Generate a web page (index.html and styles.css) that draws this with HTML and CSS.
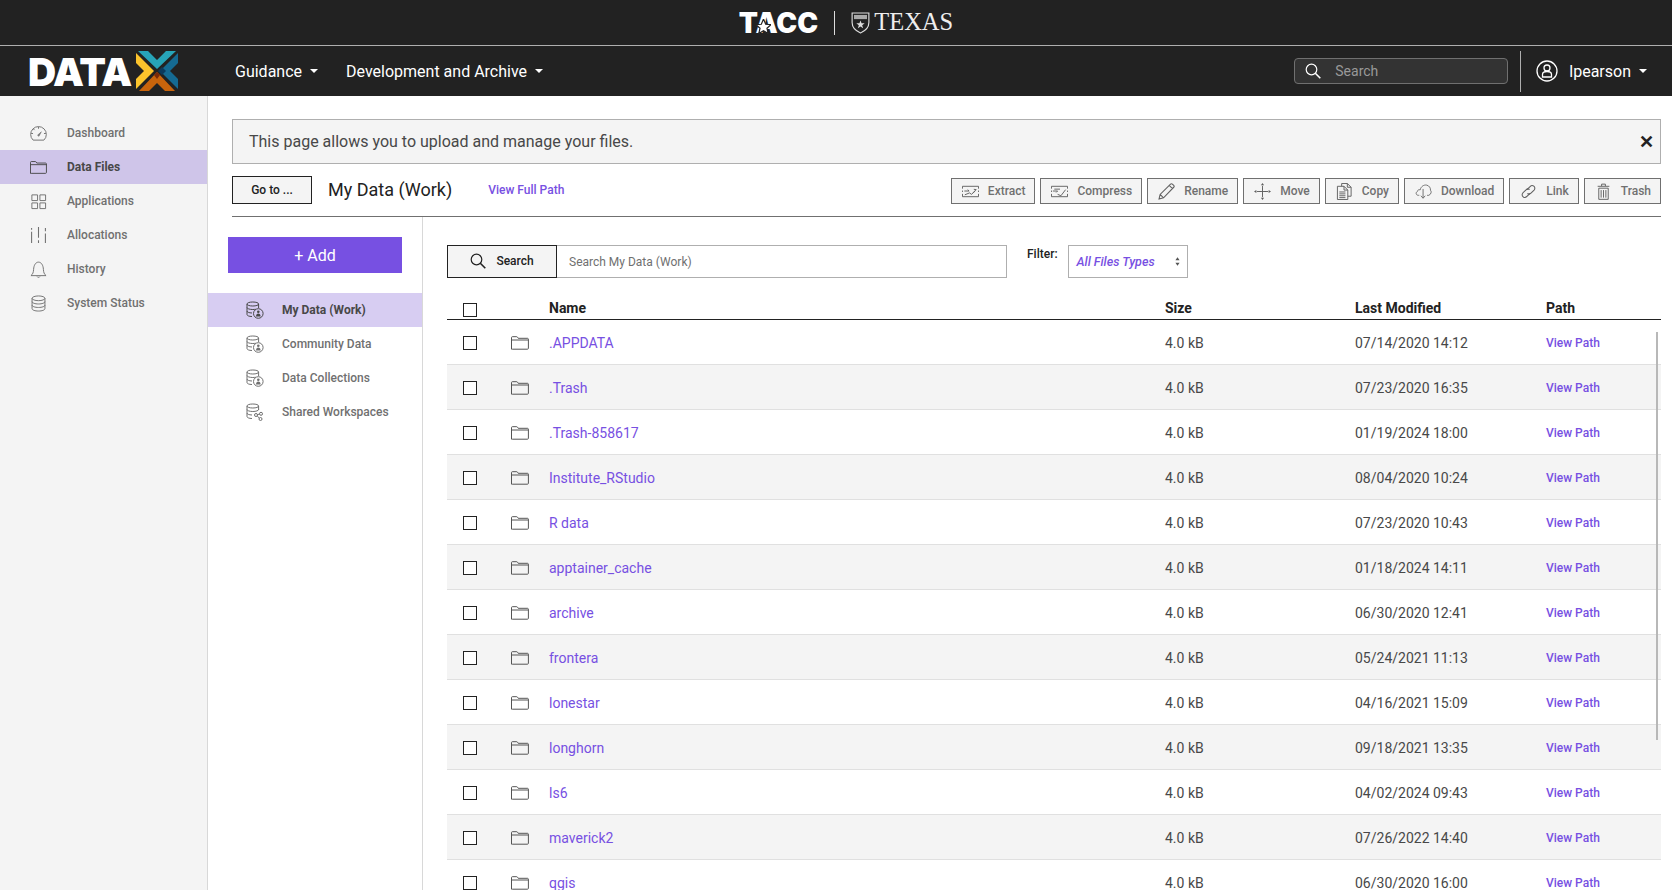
FILE: index.html
```html
<!DOCTYPE html>
<html lang="en">
<head>
<meta charset="utf-8">
<title>Data Files</title>
<link rel="stylesheet" href="styles.css">
</head>
<body>
<svg class="sprite" width="0" height="0">
  <defs>
    <symbol id="i-folder" viewBox="0 0 18 14"><path d="M.5 13.200V1.600c0-.5.3-.9.8-.9h4.400c.4 0 .6.2.8.5l.7 1.100h9.300c.5 0 .9.4.9.9v9.100c0 .5-.4.9-.9.9H1.300c-.5 0-.8-.2-.8-.7zM.5 4h17" fill="none" stroke="currentColor"/></symbol>
    <symbol id="i-gauge" viewBox="0 0 18 16"><path d="M3.300 15h11.400A8.300 8.300 0 1 0 3.300 15z" fill="none" stroke="currentColor"/><path d="M8 9.800l4-3.600-2.600 4.800z" fill="currentColor" stroke="currentColor" stroke-width=".6"/><path d="M9 1v2M1.200 8h2M14.800 8h2M3.600 3.200l1.200 1.200" stroke="currentColor" fill="none"/></symbol>
    <symbol id="i-apps" viewBox="-1 -1 18 18"><path d="M1 1h6v6H1zM9.500 1h6v6h-6zM1 9.500h6v6H1zM9.500 9.500h6v6h-6z" fill="none" stroke="currentColor"/></symbol>
    <symbol id="i-alloc" viewBox="0 0 16 16"><path d="M1.500 1v1.500M1.500 4.500V15M8 0v10M8 12.500V15M14.500 1v3M14.500 6V15" fill="none" stroke="currentColor"/></symbol>
    <symbol id="i-bell" viewBox="0 0 18 18"><path d="M1 15.500c2-1.500 2.600-3.500 2.800-6.500C4 4.500 6 1.200 9 1.200S14 4.500 14.200 9c.2 3 .8 5 2.800 6.500zM7.500 16.500c.3 1 2.700 1 3 0" fill="none" stroke="currentColor"/></symbol>
    <symbol id="i-db" viewBox="0 0 16 18"><g fill="none" stroke="currentColor"><ellipse cx="8" cy="3.500" rx="6.800" ry="2.500"/><path d="M1.200 3.500v11c0 1.400 3 2.500 6.800 2.500s6.800-1.100 6.800-2.500v-11M1.200 7c0 1.400 3 2.500 6.800 2.500S14.800 8.400 14.800 7M1.200 10.700c0 1.400 3 2.500 6.800 2.500s6.800-1.100 6.800-2.500"/></g></symbol>
    <symbol id="i-mydata" viewBox="0 0 18 18"><g fill="none" stroke="currentColor"><path d="M1 3c0-1.200 2.500-2 5.800-2s5.800.8 5.800 2-2.500 2-5.800 2S1 4.200 1 3zM1 3v10.500c0 1.100 2 2 5 2M12.600 3v4M1 6.500c0 1.100 2.500 2 5.800 2 1 0 2-.1 2.800-.3M1 10c0 1.100 2 1.900 5 2"/><circle cx="12.300" cy="12.500" r="4.800"/></g><circle cx="12.300" cy="10.700" r="1.300" fill="currentColor"/><path d="M10 15.500c0-2 1-3 2.300-3s2.300 1 2.300 3z" fill="currentColor"/></symbol>
    <symbol id="i-shared" viewBox="0 0 18 18"><g fill="none" stroke="currentColor"><path d="M1 3c0-1.200 2.500-2 5.800-2s5.800.8 5.800 2-2.500 2-5.800 2S1 4.200 1 3zM1 3v10.500c0 1.100 2 2 5 2M12.600 3v4M1 6.500c0 1.100 2.500 2 5.800 2s5.800-.9 5.800-2M1 10c0 1.100 2 1.900 5 2"/><circle cx="10" cy="12" r="1.500"/><circle cx="15" cy="10.800" r="1.500"/><circle cx="14.500" cy="16" r="1.500"/><path d="M11.400 11.600l2.200-.5M11.200 13l2.100 2"/></g></symbol>
    <symbol id="i-extract" viewBox="0 0 18 14"><g fill="none" stroke="currentColor"><path d="M.5 4V1.500h17V4M.5 6v1.500M.5 9.500v3h17v-3M17.500 6v1.500"/><path d="M2.500 6.500h5l-1.500-1.500M12 8l3-3-2.500-.3M3 10.500l5-2 2 1.500 4-3.500"/></g></symbol>
    <symbol id="i-compress" viewBox="0 0 18 14"><g fill="none" stroke="currentColor"><path d="M.5 4V1.500h17V4M.5 6v1.500M.5 9.500v3h17v-3M17.500 6v1.500"/><path d="M2 6.500h5l-1.500 1.500M7 10l3.500 1.500L15.500 5M3.500 4.500h6"/></g></symbol>
    <symbol id="i-pencil" viewBox="0 0 16 16"><path d="M1 15l1-4.200L11.800 1c.5-.5 1.200-.5 1.700 0l1.300 1.300c.5.5.5 1.200 0 1.700L5.200 13.900zM2 10.800l3.200 3.100M10.500 2.300l3.200 3.100" fill="none" stroke="currentColor"/></symbol>
    <symbol id="i-move" viewBox="0 0 18 18"><path d="M9 3v4M9 11v4M3 9h4M11 9h4" fill="none" stroke="currentColor"/><path d="M9 5.500v7M5.500 9h7" fill="none" stroke="currentColor"/><path d="M9 0l1.700 2.500H7.300zM9 18l1.700-2.500H7.300zM0 9l2.500-1.700v3.400zM18 9l-2.500-1.700v3.400z" fill="currentColor"/></symbol>
    <symbol id="i-copy" viewBox="0 0 16 18"><g fill="none" stroke="currentColor"><path d="M5 3.500V.5h6l4 4v9.500h-3.500"/><path d="M11 .5v4h4"/><path d="M.5 3.500h7l4 4v10H.5z"/><path d="M7.500 3.500v4h4M2.500 9.500h6.500M2.500 11.500h6.500M2.500 13.500h6.500M2.500 15.500h6.500"/></g></symbol>
    <symbol id="i-download" viewBox="0 0 20 18"><path d="M5 13.500H4C1 13.500.5 10 2.800 9 3 7 5 6.500 6 7.200 7 3 10.500.8 13.800 1.500c3 .7 4.700 3.500 4.400 6 1.500 1.200 1 4.800-2 6h-2M9.500 6v10.500M7 14l2.500 3 2.500-3" fill="none" stroke="currentColor"/></symbol>
    <symbol id="i-link" viewBox="0 0 16 16"><g fill="none" stroke="currentColor"><path d="M6.500 6.300l3-3c1-1 2.400-1.200 3.500-.3 1.200 1 1.300 2.500.3 3.600l-3 3c-.9.900-2.300 1-3.300.3"/><path d="M9.500 9.700l-3 3c-1 1-2.400 1.200-3.500.3-1.200-1-1.300-2.500-.3-3.600l3-3c.9-.9 2.300-1 3.300-.3"/></g></symbol>
    <symbol id="i-trash" viewBox="0 0 14 18"><g fill="none" stroke="currentColor"><path d="M.8 3.500h12.400M5 3.200V1.200h4v2M2 5.500h10v11.800H2zM4.500 7.500v8M7 7.500v8M9.500 7.500v8"/></g></symbol>
    <symbol id="i-search" viewBox="0 0 16 16"><circle cx="6.500" cy="6.500" r="5.300" fill="none" stroke="currentColor" stroke-width="1.200"/><path d="M10.300 10.300l5 5" fill="none" stroke="currentColor" stroke-width="1.600"/></symbol>
  </defs>
</svg>

<header class="brandbar">
  <span class="tacc">TACC<svg class="tacc-star" viewBox="0 0 20 20"><path d="M10 0l2.900 7 7.100.6-5.400 4.700 1.700 7.200-6.300-3.900-6.300 3.900 1.700-7.200L0 7.600 7.100 7z" fill="#fff" stroke="#222" stroke-width="1.600"/></svg></span>
  <span class="brand-sep"></span>
  <svg class="shield" viewBox="0 0 18 21"><path d="M1 1h16v9c0 5-3.500 8-8 10-4.500-2-8-5-8-10z" fill="none" stroke="#ddd" stroke-width="1.100"/><path d="M2.800 2.800h12.400v4H2.800z" fill="#aaa"/><path d="M9 8l1 2.800h3l-2.400 1.800.9 2.900L9 13.800l-2.500 1.700.9-2.900L5 10.800h3z" fill="#ddd"/></svg>
  <span class="texas">TEXAS</span>
</header>

<nav class="topnav">
  <div class="logo">
    <span class="logo-text">DATA</span>
    <svg class="logo-x" viewBox="0 0 42 40">
      <path d="M2 0h10l9 9 9-9h10L21 18z" fill="#27a4b8"/>
      <path d="M42 2v10l-8 8 8 8v10L24 20z" fill="#156a92"/>
      <path d="M3 40l18-19 18 19H29l-8-8-8 8z" fill="#c8640c"/>
      <path d="M0 2l18 18L0 38V28l8-8-8-8z" fill="#fcc42c"/>
      <path d="M26 16l4 4-4 4-4-4z" fill="#0c3a5c"/>
      <path d="M21 21l3 3-3 4-3-4z" fill="#7a2a08"/>
    </svg>
  </div>
  <a class="navlink first">Guidance <i class="caret"></i></a>
  <a class="navlink">Development and Archive <i class="caret"></i></a>
  <div class="nav-right">
    <div class="nav-search">
      <svg class="nav-search-icon"><use href="#i-search"/></svg>
      <span>Search</span>
    </div>
    <span class="nav-sep"></span>
    <svg class="avatar" viewBox="0 0 22 22"><circle cx="11" cy="11" r="10" fill="none" stroke="#fff" stroke-width="1.300"/><circle cx="11" cy="8" r="3" fill="none" stroke="#fff" stroke-width="1.300"/><path d="M6.500 17v-2.500c0-2 1.500-3 4.500-3s4.500 1 4.500 3V17z" fill="none" stroke="#fff" stroke-width="1.300"/></svg>
    <a class="username">lpearson <i class="caret"></i></a>
  </div>
</nav>

<div class="shell">
  <aside class="sidebar">
    <a class="side-item"><svg class="side-icon"><use href="#i-gauge"/></svg>Dashboard</a>
    <a class="side-item active"><svg class="side-icon"><use href="#i-folder"/></svg>Data Files</a>
    <a class="side-item"><svg class="side-icon"><use href="#i-apps"/></svg>Applications</a>
    <a class="side-item"><svg class="side-icon"><use href="#i-alloc"/></svg>Allocations</a>
    <a class="side-item"><svg class="side-icon"><use href="#i-bell"/></svg>History</a>
    <a class="side-item"><svg class="side-icon"><use href="#i-db"/></svg>System Status</a>
  </aside>

  <main class="content">
    <div class="banner">
      <span>This page allows you to upload and manage your files.</span>
      <span class="banner-close">✕</span>
    </div>
    <div class="pathbar">
      <button class="goto">Go to ...</button>
      <h1 class="crumb">My Data (Work)</h1>
      <a class="fullpath">View Full Path</a>
      <div class="tools">
        <button class="tool"><svg class="ti"><use href="#i-extract"/></svg>Extract</button>
        <button class="tool"><svg class="ti"><use href="#i-compress"/></svg>Compress</button>
        <button class="tool"><svg class="ti"><use href="#i-pencil"/></svg>Rename</button>
        <button class="tool"><svg class="ti"><use href="#i-move"/></svg>Move</button>
        <button class="tool"><svg class="ti"><use href="#i-copy"/></svg>Copy</button>
        <button class="tool"><svg class="ti"><use href="#i-download"/></svg>Download</button>
        <button class="tool"><svg class="ti"><use href="#i-link"/></svg>Link</button>
        <button class="tool"><svg class="ti"><use href="#i-trash"/></svg>Trash</button>
      </div>
    </div>

    <div class="workspace">
      <section class="systems">
        <button class="add">+ Add</button>
        <ul class="syslist">
          <li class="sys active"><svg class="sys-icon"><use href="#i-mydata"/></svg>My Data (Work)</li>
          <li class="sys"><svg class="sys-icon"><use href="#i-mydata"/></svg>Community Data</li>
          <li class="sys"><svg class="sys-icon"><use href="#i-mydata"/></svg>Data Collections</li>
          <li class="sys"><svg class="sys-icon"><use href="#i-shared"/></svg>Shared Workspaces</li>
        </ul>
      </section>

      <section class="listing">
        <div class="searchrow">
          <button class="search-btn"><svg class="search-btn-icon"><use href="#i-search"/></svg>Search</button>
          <div class="search-input">Search My Data (Work)</div>
          <label class="filter-label">Filter:</label>
          <div class="filter"><em>All Files Types</em><svg class="updown" viewBox="0 0 6 10"><path d="M3 0l2.500 3.500h-5zM3 10l2.500-3.500h-5z" fill="#555"/></svg></div>
        </div>

        <div class="table">
          <div class="thead">
            <span class="cb"></span><span></span><span>Name</span><span>Size</span><span>Last Modified</span><span>Path</span>
          </div>
          <div class="row"><span class="cb"></span><svg class="fi"><use href="#i-folder"/></svg><a class="name">.APPDATA</a><span>4.0 kB</span><span>07/14/2020 14:12</span><a class="vp">View Path</a></div>
          <div class="row"><span class="cb"></span><svg class="fi"><use href="#i-folder"/></svg><a class="name">.Trash</a><span>4.0 kB</span><span>07/23/2020 16:35</span><a class="vp">View Path</a></div>
          <div class="row"><span class="cb"></span><svg class="fi"><use href="#i-folder"/></svg><a class="name">.Trash-858617</a><span>4.0 kB</span><span>01/19/2024 18:00</span><a class="vp">View Path</a></div>
          <div class="row"><span class="cb"></span><svg class="fi"><use href="#i-folder"/></svg><a class="name">Institute_RStudio</a><span>4.0 kB</span><span>08/04/2020 10:24</span><a class="vp">View Path</a></div>
          <div class="row"><span class="cb"></span><svg class="fi"><use href="#i-folder"/></svg><a class="name">R data</a><span>4.0 kB</span><span>07/23/2020 10:43</span><a class="vp">View Path</a></div>
          <div class="row"><span class="cb"></span><svg class="fi"><use href="#i-folder"/></svg><a class="name">apptainer_cache</a><span>4.0 kB</span><span>01/18/2024 14:11</span><a class="vp">View Path</a></div>
          <div class="row"><span class="cb"></span><svg class="fi"><use href="#i-folder"/></svg><a class="name">archive</a><span>4.0 kB</span><span>06/30/2020 12:41</span><a class="vp">View Path</a></div>
          <div class="row"><span class="cb"></span><svg class="fi"><use href="#i-folder"/></svg><a class="name">frontera</a><span>4.0 kB</span><span>05/24/2021 11:13</span><a class="vp">View Path</a></div>
          <div class="row"><span class="cb"></span><svg class="fi"><use href="#i-folder"/></svg><a class="name">lonestar</a><span>4.0 kB</span><span>04/16/2021 15:09</span><a class="vp">View Path</a></div>
          <div class="row"><span class="cb"></span><svg class="fi"><use href="#i-folder"/></svg><a class="name">longhorn</a><span>4.0 kB</span><span>09/18/2021 13:35</span><a class="vp">View Path</a></div>
          <div class="row"><span class="cb"></span><svg class="fi"><use href="#i-folder"/></svg><a class="name">ls6</a><span>4.0 kB</span><span>04/02/2024 09:43</span><a class="vp">View Path</a></div>
          <div class="row"><span class="cb"></span><svg class="fi"><use href="#i-folder"/></svg><a class="name">maverick2</a><span>4.0 kB</span><span>07/26/2022 14:40</span><a class="vp">View Path</a></div>
          <div class="row"><span class="cb"></span><svg class="fi"><use href="#i-folder"/></svg><a class="name">qgis</a><span>4.0 kB</span><span>06/30/2020 16:00</span><a class="vp">View Path</a></div>
          <div class="scrollthumb"></div>
        </div>
      </section>
    </div>
  </main>
</div>
</body>
</html>
```
FILE: styles.css
```css
* { box-sizing: border-box; }
html, body { margin: 0; height: 100%; overflow: hidden; }
body { font-family: Roboto, "Liberation Sans", sans-serif; color: #484848; background: #fff; font-size: 14px; }
button { font-family: inherit; cursor: pointer; }
a { color: inherit; text-decoration: none; }
.sprite { position: absolute; }

/* Brand bar */
.brandbar { height: 46px; background: #222; border-bottom: 1px solid #afafaf; display: flex; align-items: center; justify-content: center; padding-left: 20px; }
.tacc { position: relative; font-family: Inter, "Liberation Sans", sans-serif; font-weight: 900; font-size: 28px; letter-spacing: 0; color: #fff; line-height: 1; }
.tacc-star { position: absolute; left: 17px; top: 10px; width: 15px; height: 15px; }
.brand-sep { width: 1px; height: 24px; background: #ddd; margin: 0 16px; }
.shield { width: 19px; height: 22px; margin-right: 4px; }
.texas { font-family: "Liberation Serif", serif; font-size: 24.5px; color: #eee; line-height: 1; }

/* Top nav */
.topnav { height: 50px; background: #222; display: flex; align-items: center; color: #fff; }
.logo { width: 200px; padding-left: 28px; display: flex; align-items: center; gap: 5px; flex: none; }
.logo-text { font-family: Inter, "Liberation Sans", sans-serif; font-weight: 900; font-size: 39px; letter-spacing: -1.2px; color: #fff; line-height: 1; }
.logo-x { width: 42px; height: 40px; flex: none; }
.navlink { font-size: 16px; display: inline-flex; align-items: center; gap: 8px; margin-right: 28px; }
.navlink.first { margin-left: 35px; }
.caret { display: inline-block; width: 0; height: 0; border: 4px solid transparent; border-top-color: #fff; border-bottom: 0; }
.nav-right { margin-left: auto; display: flex; align-items: center; }
.nav-search { width: 214px; height: 26px; border: 1px solid #707070; border-radius: 4px; background: #333; display: flex; align-items: center; color: #999; font-size: 14px; padding-left: 10px; gap: 14px; }
.nav-search-icon { width: 16px; height: 16px; color: #fff; }
.nav-sep { width: 1px; height: 41px; background: #afafaf; margin: 0 15px 0 12px; }
.avatar { width: 22px; height: 22px; margin-right: 11px; }
.username { font-size: 16px; font-weight: 400; display: inline-flex; align-items: center; gap: 8px; margin-right: 25px; }

/* Shell */
.shell { display: flex; height: 794px; }
.sidebar { width: 208px; flex: none; background: #f4f4f4; border-right: 1px solid #d8d8d8; padding-top: 20px; }
.side-item { height: 34px; display: flex; align-items: center; font-size: 12px; font-weight: 500; color: #707070; padding-left: 30px; }
.side-item.active { background: #cfc5e9; color: #484848; font-weight: 700; }
.side-icon { width: 17px; height: 17px; margin-right: 20px; flex: none; }

.content { flex: 1; min-width: 0; padding-top: 23px; display: flex; flex-direction: column; }
.banner { margin: 0 11px 0 24px; height: 45px; background: #f4f4f4; border: 1px solid #afafaf; display: flex; align-items: center; justify-content: space-between; padding: 0 6px 0 16px; font-size: 16px; color: #484848; }
.banner-close { font-size: 18px; font-weight: 700; color: #222; }

.pathbar { margin: 11px 11px 0 24px; height: 42px; border-bottom: 1px solid #707070; display: flex; align-items: flex-start; }
.goto { width: 80px; height: 28px; border: 1px solid #222; background: #f4f4f4; color: #222; font-size: 12px; font-weight: 500; padding: 0; margin-top: 1px; }
.crumb { font-size: 18px; font-weight: 400; color: #222; margin: 3px 0 0 16px; line-height: 24px; }
.fullpath { font-size: 12px; font-weight: 500; color: #7750e2; margin: 7px 0 0 36px; line-height: 16px; }
.tools { margin-left: auto; display: flex; gap: 5px; margin-top: 3px; }
.tool { height: 26px; border: 1px solid #707070; background: #f4f4f4; color: #707070; font-size: 12px; font-weight: 500; display: flex; align-items: center; padding: 0 9px 0 10px; gap: 9px; }
.ti { width: 17px; height: 17px; flex: none; color: #606060; }

.workspace { flex: 1; min-height: 0; display: flex; }
.systems { width: 215px; flex: none; border-right: 1px solid #d8d8d8; padding-top: 20px; }
.add { display: block; width: 174px; height: 36px; margin-left: 20px; border: 0; background: #7750e2; color: #fff; font-size: 16px; }
.syslist { list-style: none; margin: 20px 0 0; padding: 0; }
.sys { height: 34px; display: flex; align-items: center; font-size: 12px; font-weight: 500; color: #707070; padding-left: 38px; }
.sys.active { background: #d7cdf2; color: #484848; font-weight: 700; }
.sys-icon { width: 18px; height: 18px; margin-right: 18px; flex: none; }

.listing { flex: 1; min-width: 0; padding: 28px 11px 0 24px; }
.searchrow { display: flex; align-items: flex-start; height: 33px; }
.search-btn { width: 110px; height: 33px; border: 1px solid #222; background: #f4f4f4; color: #222; font-size: 12px; font-weight: 500; display: flex; align-items: center; justify-content: center; gap: 10px; padding: 0 0 1px; flex: none; }
.search-btn-icon { width: 16px; height: 16px; }
.search-input { width: 450px; height: 33px; border: 1px solid #afafaf; border-left: 0; padding-left: 12px; display: flex; align-items: center; font-size: 12px; color: #707070; flex: none; }
.filter-label { font-size: 12px; font-weight: 500; color: #222; margin: 1px 0 0 20px; line-height: 16px; }
.filter { width: 120px; height: 33px; margin-left: 10px; border: 1px solid #afafaf; display: flex; align-items: center; justify-content: space-between; padding: 0 7px 0 8px; font-size: 12.500px; font-weight: 500; color: #7750e2; }
.updown { width: 5px; height: 9px; }

.table { position: relative; margin-top: 21px; }
.thead, .row { display: grid; grid-template-columns: 64px 38px 616px 190px 191px 1fr; align-items: center; }
.thead { height: 21px; padding-bottom: 3px; border-bottom: 1px solid #222; font-size: 14px; font-weight: 700; color: #222; }
.thead .cb { margin-top: 4px; }
.row { height: 45px; padding-top: 2px; border-bottom: 1px solid #e0e0e0; font-size: 14px; color: #484848; }
.row:nth-child(odd) { background: #f4f4f4; }
.cb { display: block; width: 14px; height: 14px; border: 1px solid #222; margin-left: 16px; background: #fff; }
.fi { width: 18px; height: 14px; color: #555; }
.name { color: #7750e2; }
.vp { color: #7750e2; font-size: 12px; font-weight: 500; }
.scrollthumb { position: absolute; top: 33px; right: 3px; width: 2px; height: 408px; background: #b8b8b8; }
```
